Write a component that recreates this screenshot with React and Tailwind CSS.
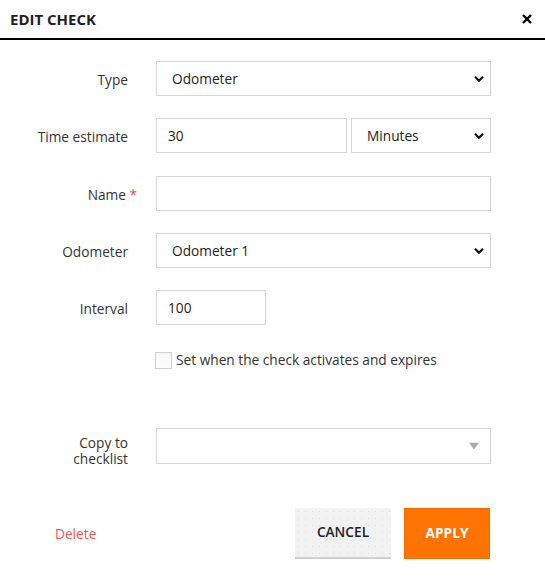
import React from "react";

function Chevron() {
  return (
    <svg width="10" height="7" viewBox="0 0 10 7" className="absolute right-[6px] top-1/2 -translate-y-1/2">
      <polyline points="1,1.2 5,5.2 9,1.2" fill="none" stroke="#111" strokeWidth="2.2" />
    </svg>
  );
}

function SelectBox({ value, className }) {
  return (
    <div className={"relative h-[35px] border border-[#d6d6d6] bg-white flex items-center pl-[15px] text-[#222] " + className}>
      <span className="translate-y-[1px]">{value}</span>
      <Chevron />
    </div>
  );
}

function Row({ label, children, className = "", labelClass = "translate-y-[1px]" }) {
  return (
    <div className={"flex items-center " + className}>
      <div className={"w-[128px] text-right text-[#333] leading-[16px] " + labelClass}>{label}</div>
      <div className="ml-[28px] flex">{children}</div>
    </div>
  );
}

export default function App() {
  return (
    <div className="w-[545px] h-[580px] bg-white font-['Open_Sans',sans-serif] text-[13.7px] text-[#333]">
      <div className="h-[40px] border-b-2 border-black flex items-center justify-between pl-[10px] pr-[13px]">
        <span className="text-[15px] font-bold text-[#222]">EDIT CHECK</span>
        <svg width="10" height="10" viewBox="0 0 10 10">
          <line x1="1" y1="1" x2="9" y2="9" stroke="#000" strokeWidth="2.4" />
          <line x1="9" y1="1" x2="1" y2="9" stroke="#000" strokeWidth="2.4" />
        </svg>
      </div>

      <div className="pt-[21px]">
        <Row label="Type">
          <SelectBox value="Odometer" className="w-[335px]" />
        </Row>

        <Row label="Time estimate" className="mt-[22px]">
          <div className="h-[35px] w-[191px] border border-[#d6d6d6] flex items-center pl-[11px] text-[#222]">
            <span className="translate-y-[1px]">30</span>
          </div>
          <SelectBox value="Minutes" className="w-[140px] ml-[4px]" />
        </Row>

        <Row
          label={
            <span>
              Name <span className="text-[#f04e3e]">*</span>
            </span>
          }
          className="mt-[23px] [&>div:first-child]:w-[137px] [&>div:nth-child(2)]:ml-[19px]"
        >
          <div className="h-[35px] w-[335px] border border-[#d6d6d6]"></div>
        </Row>

        <Row label="Odometer" className="mt-[22px]">
          <SelectBox value="Odometer 1" className="w-[335px]" />
        </Row>

        <Row label="Interval" className="mt-[22px]">
          <div className="h-[35px] w-[110px] border border-[#d6d6d6] flex items-center pl-[11px] text-[#222]">
            <span className="translate-y-[1px]">100</span>
          </div>
        </Row>

        <div className="flex items-center mt-[25px] pl-[155px]">
          <div className="w-[17px] h-[17px] border border-[#d0d0d0] bg-gradient-to-b from-[#f6f6f6] to-white"></div>
          <span className="ml-[4px] text-[#333]">Set when the check activates and expires</span>
        </div>

        <Row
          label={
            <span>
              Copy to
              <br />
              checklist
            </span>
          }
          labelClass="translate-y-[5px]"
          className="mt-[57px]"
        >
          <div className="relative h-[36px] w-[335px] border border-[#d6d6d6]">
            <svg width="10" height="7" viewBox="0 0 10 7" className="absolute right-[11px] top-1/2 -translate-y-1/2">
              <polygon points="0,0 10,0 5,7" fill="#a8a8a8" />
            </svg>
          </div>
        </Row>

        <div className="flex items-center mt-[44px]">
          <span className="ml-[55px] text-[#f2584a] translate-y-[1px]">Delete</span>
          <div className="ml-auto mr-[55px] flex gap-[13px]">
            <div className="w-[96px] h-[51px] bg-[#f2f2f2] bg-[radial-gradient(#dcdcdc_0.6px,transparent_0.8px)] bg-[length:7px_7px] border-b-[2px] border-[#cfcfcf] flex items-center justify-center font-semibold text-[#222]">
              CANCEL
            </div>
            <div className="w-[86px] h-[51px] bg-[#ff7300] border border-[#ee6c00] flex items-center justify-center font-bold text-white">
              APPLY
            </div>
          </div>
        </div>
      </div>
    </div>
  );
}
